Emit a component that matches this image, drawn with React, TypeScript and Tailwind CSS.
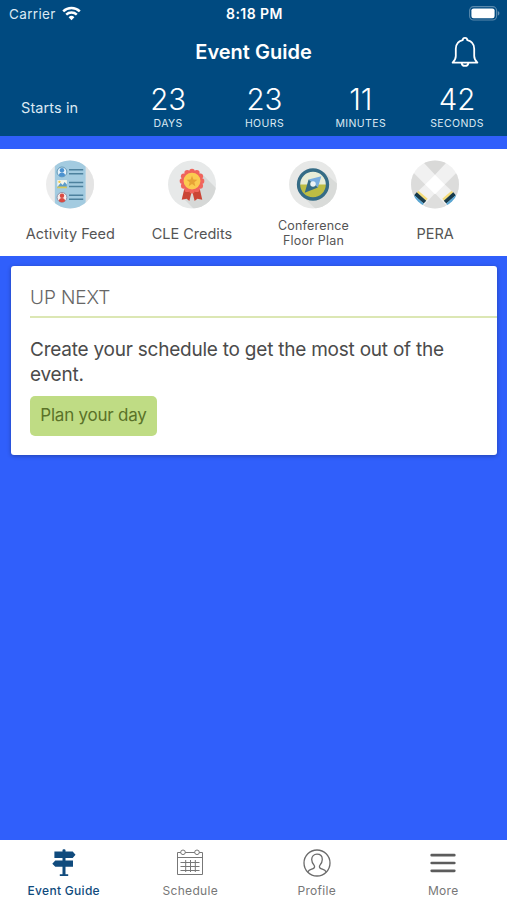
import type { ReactNode } from 'react';
import { clsx } from 'clsx';

interface CountdownUnit {
  value: string;
  label: string;
}

interface Shortcut {
  label: string;
  icon: ReactNode;
  small?: boolean;
}

interface Tab {
  label: string;
  icon: ReactNode;
  active?: boolean;
}

function WifiIcon() {
  return (
    <svg className="h-[15px] w-[19px]" viewBox="0 0 19 15" fill="none" stroke="#fff" strokeWidth="2.5">
      <path d="M1.2 5.3a12 12 0 0 1 16.6 0" />
      <path d="M4.2 8.6a7.8 7.8 0 0 1 10.6 0" />
      <path d="M9.5 14.2 6.6 11.2a4.2 4.2 0 0 1 5.8 0z" fill="#fff" stroke="none" />
    </svg>
  );
}

function BatteryIcon() {
  return (
    <svg className="h-[15px] w-[31px]" viewBox="0 0 31 15">
      <rect x="0.6" y="0.6" width="27" height="13.4" rx="4" fill="none" stroke="#fff" strokeOpacity="0.35" strokeWidth="1.1" />
      <rect x="2.4" y="2.4" width="23.2" height="9.8" rx="2.2" fill="#fff" />
      <path d="M28.8 5v4.6c1-.4 1.6-1.3 1.6-2.3s-.6-1.9-1.6-2.3z" fill="#fff" fillOpacity="0.4" />
    </svg>
  );
}

function BellIcon() {
  return (
    <svg className="h-[32px] w-[30px]" viewBox="0 0 30 32" fill="none" stroke="#fff" strokeWidth="1.8" strokeLinejoin="round">
      <path d="M15 1.8c-1.4 0-2.2.9-2.3 2.3C8.2 5.1 5.8 8.6 5.8 12.8V20c0 2.6-1 4.5-3.2 6.600h24.800c-2.200-2.100-3.200-4-3.200-6.600v-7.200c0-4.200-2.400-7.700-6.900-8.700-.1-1.400-.9-2.300-2.300-2.300z" />
      <path d="M11.6 26.800c.2 1.900 1.500 3.100 3.400 3.100s3.200-1.200 3.400-3.100" />
    </svg>
  );
}

function FeedIcon() {
  return (
    <svg className="size-[50px]" viewBox="0 0 50 50">
      <clipPath id="feed">
        <circle cx="25" cy="25" r="24.5" />
      </clipPath>
      <g clipPath="url(#feed)">
        <rect width="50" height="50" fill="#ececec" />
        <path d="M41 0h9v50h-9z" fill="#e4e4e4" />
        <rect x="9.5" y="0" width="31.5" height="50" fill="#a3cbe0" />
        <circle cx="16.8" cy="12.2" r="5" fill="#e6f2fa" stroke="#5b93b3" strokeWidth="1" />
        <circle cx="16.8" cy="10.5" r="2.3" fill="#4b92d0" />
        <path d="M13.6 15.8c0-4 6.4-4 6.4 0-1.9 1.7-4.5 1.7-6.4 0z" fill="#4b92d0" />
        <rect x="12" y="20.5" width="9.8" height="8" fill="#f3f4ea" />
        <path d="m12 27.5 3.5-4 2 2 2-3 2.3 2.5v3.5H12z" fill="#5d9cc9" />
        <path d="M12 27h9.8v1.8H12z" fill="#d8c95a" />
        <circle cx="14.2" cy="22.3" r="1.2" fill="#f2c94c" />
        <circle cx="16.8" cy="38.2" r="5" fill="#f5eeee" stroke="#8f8fa5" strokeWidth="1" />
        <circle cx="16.8" cy="36.5" r="2.3" fill="#d94a42" />
        <path d="M13.6 41.8c0-4 6.4-4 6.4 0-1.9 1.7-4.5 1.7-6.4 0z" fill="#d94a42" />
        <path d="M24 10h14.5M24 14h14.5M24 23h14.5M24 27h14.5M24 36h14.5M24 40h14.5" stroke="#4d819d" strokeWidth="1.5" />
      </g>
    </svg>
  );
}

function RibbonIcon() {
  const petals = Array.from({ length: 12 }, (_, i) => {
    const a = (i * Math.PI) / 6;
    return { x: 25 + 9.7 * Math.cos(a), y: 21.5 + 9.7 * Math.sin(a) };
  });

  return (
    <svg className="size-[50px]" viewBox="0 0 50 50">
      <clipPath id="ribbon">
        <circle cx="25" cy="25" r="24.5" />
      </clipPath>
      <g clipPath="url(#ribbon)">
        <rect width="50" height="50" fill="#e7e9e9" />
        <path d="m34 13 18 18v24H32L15 38z" fill="#d6d8d7" />
      </g>
      <path d="m17 30-2.5 10.5 5-.8 2.8 2.3 2.5-10z" fill="#ca4536" />
      <path d="m33 30 2.5 10.5-5-.8-2.8 2.3-2.5-10z" fill="#ca4536" />
      <circle cx="25" cy="21.5" r="10.5" fill="#f0645c" />
      {petals.map((p, i) => (
        <circle key={i} cx={p.x} cy={p.y} r="2.9" fill="#f0645c" />
      ))}
      <circle cx="25" cy="21.5" r="8.6" fill="#fbcb50" />
      <path d="m25 16 1.5 3.8 4 .3-3.1 2.6 1 4L25 24.5l-3.4 2.2 1-4-3.1-2.6 4-.3z" fill="#e7a336" />
    </svg>
  );
}

function CompassIcon() {
  return (
    <svg className="size-[50px]" viewBox="0 0 50 50">
      <clipPath id="compass">
        <circle cx="25" cy="25" r="24.5" />
      </clipPath>
      <g clipPath="url(#compass)">
        <rect width="50" height="50" fill="#e7e8e7" />
        <path d="m36 12 18 16v24H30L14 37z" fill="#d9dbd9" />
      </g>
      <circle cx="25" cy="25" r="15" fill="#e8edd8" />
      <path d="M11 25h28a14 14 0 0 1-28 0z" fill="#bdbd43" />
      <circle cx="25" cy="25" r="14.8" fill="none" stroke="#356c86" strokeWidth="3.4" />
      <path d="m33.5 16.500-3.500 11.500-9.500-8z" fill="#78ade0" />
      <path d="m16.5 33.500 4-13.500 9.500 8z" fill="#356c86" />
      <circle cx="25" cy="24.5" r="2.8" fill="#edf3f5" />
    </svg>
  );
}

function PeraIcon() {
  return (
    <svg className="size-[50px]" viewBox="0 0 50 50">
      <clipPath id="pera">
        <circle cx="25" cy="25" r="24.5" />
      </clipPath>
      <g clipPath="url(#pera)">
        <rect width="50" height="50" fill="#f1f1f1" />
        <path d="M10-1h30L25 15z" fill="#d9d9d8" />
        <path d="M-1 9v31l16-15z" fill="#dcdcdb" />
        <path d="M51 9v31L35 25z" fill="#dcdcdb" />
        <path d="m25 34 16 17H9z" fill="#dededd" />
        <path d="m25 15 10 10-10 10-10-10z" fill="#fff" />
        {/* cuffs */}
        <g strokeWidth="3.2">
          <path d="m7 32.500 9.500 8.200" stroke="#f4dc7c" />
          <path d="m5 34.500 9.700 8.500" stroke="#193b4c" strokeWidth="4" />
          <path d="m2.500 37.800 9.700 8.500" stroke="#5aa6d2" strokeWidth="4.500" />
          <path d="m43 32.500-9.500 8.200" stroke="#f4dc7c" />
          <path d="m45 34.500-9.700 8.500" stroke="#193b4c" strokeWidth="4" />
          <path d="m47.500 37.800-9.700 8.500" stroke="#5aa6d2" strokeWidth="4.500" />
        </g>
      </g>
    </svg>
  );
}

function SignpostIcon() {
  return (
    <svg className="size-7" viewBox="0 0 28 28" fill="#104b7d">
      <path d="M12.500 1.200c0-1.200 3-1.200 3 0v1.400h7.200l2.800 3.200-2.800 3.200h-7.200v2.600H23v6.200h-7.500v7.500h2.700v1.800H9.800v-1.800h2.700v-7.500H5.300l-3-3.100 3-3.100h7.200V9H4.400V2.600h8.100z" />
    </svg>
  );
}

function CalendarIcon() {
  return (
    <svg className="size-7" viewBox="0 0 28 28" fill="none" stroke="#777" strokeWidth="1">
      <path d="M4.800 3.500H1.500v22h25v-22h-3.300M9.200 3.500h9.600M1.500 8.500h25" />
      <circle cx="7" cy="3.3" r="2.3" />
      <circle cx="21" cy="3.3" r="2.3" />
      <path d="M4.500 13.500h19M4.500 17.500h19M4.500 21.500h19M9.700 11v12M14.500 11v12M19.300 11v12" />
    </svg>
  );
}

function ProfileIcon() {
  return (
    <svg className="size-7" viewBox="0 0 28 28" fill="none" stroke="#6b6b6b" strokeWidth="1.3">
      <circle cx="14" cy="14" r="13" />
      <path d="M4.800 23c1.200-2.300 3.500-2.500 5.300-3.400 1.600-.8 1.900-2.300.9-3.500-1.400-1.700-2.300-3.400-2.300-5.600C8.700 7.200 10.900 5.200 14 5.200s5.300 2 5.300 5.300c0 2.200-.9 3.900-2.300 5.600-1 1.200-.7 2.700.9 3.500 1.800.9 4.100 1.100 5.300 3.400" />
    </svg>
  );
}

function MenuIcon() {
  return (
    <svg className="size-7" viewBox="0 0 28 28" stroke="#5c5c5c" strokeWidth="2.7" strokeLinecap="round">
      <path d="M2.700 6.200h22.600M2.700 14h22.600M2.700 21.800h22.600" />
    </svg>
  );
}

const countdown: CountdownUnit[] = [
  { value: '23', label: 'DAYS' },
  { value: '23', label: 'HOURS' },
  { value: '11', label: 'MINUTES' },
  { value: '42', label: 'SECONDS' },
];

const shortcuts: Shortcut[] = [
  { label: 'Activity Feed', icon: <FeedIcon /> },
  { label: 'CLE Credits', icon: <RibbonIcon /> },
  { label: 'Conference Floor Plan', icon: <CompassIcon />, small: true },
  { label: 'PERA', icon: <PeraIcon /> },
];

const tabs: Tab[] = [
  { label: 'Event Guide', icon: <SignpostIcon />, active: true },
  { label: 'Schedule', icon: <CalendarIcon /> },
  { label: 'Profile', icon: <ProfileIcon /> },
  { label: 'More', icon: <MenuIcon /> },
];

export default function App() {
  return (
    <div className="flex h-[900px] w-[507px] flex-col overflow-hidden bg-[#305ffb] font-['Inter',sans-serif]">
      <header className="h-[136px] shrink-0 bg-[#004a80] text-white">
        <div className="grid h-[26px] grid-cols-3 items-center pr-[7px] pl-[9px] text-[13.5px] leading-[26px]">
          <div className="flex items-center gap-[6px] tracking-[0.35px] text-[#dbe9f3]">
            Carrier
            <WifiIcon />
          </div>
          <div className="pt-px text-center text-[14px] font-semibold tracking-[0.45px]">8:18 PM</div>
          <div className="flex justify-end">
            <BatteryIcon />
          </div>
        </div>

        <div className="grid h-[52px] grid-cols-[1fr_auto_1fr] items-center pr-[27px] pl-[27px]">
          <span />
          <h1 className="text-[20px] font-semibold">Event Guide</h1>
          <button className="justify-self-end">
            <BellIcon />
          </button>
        </div>

        <div className="flex h-[58px] pl-[21px]">
          <div className="w-[99px] pt-[19px] text-[14.5px] leading-[22px] tracking-[0.1px] text-[#dbe9f3]">Starts in</div>
          {countdown.map((unit) => (
            <div key={unit.label} className="w-[96.3px] text-center">
              <div className="pt-[5px] text-[29.5px] leading-[33px] font-light">{unit.value}</div>
              <div className="pt-px text-[10.5px] leading-[13px] tracking-[0.4px] text-[#dbe9f3]">{unit.label}</div>
            </div>
          ))}
        </div>
      </header>

      <nav className="mt-[13px] flex h-[107px] shrink-0 bg-white pl-[9.5px]">
        {shortcuts.map((item) => (
          <div key={item.label} className="flex w-[121.6px] flex-col items-center pt-[11px] text-[#555]">
            {item.icon}
            <div
              className={clsx(
                'flex h-[48px] items-center text-center',
                item.small ? 'w-[90px] pt-[2px] text-[12.5px] leading-[15px] tracking-[0.2px]' : 'pt-[2px] text-[14.5px]'
              )}
            >
              {item.label}
            </div>
          </div>
        ))}
      </nav>

      <main className="flex-1 px-[10px] pt-[10px]">
        <section className="ml-px h-[189px] rounded-[3px] bg-white pt-[20px] pl-[19px] shadow-[0_1px_4px_rgba(0,0,0,0.3)]">
          <h2 className="h-[32px] border-b-2 border-[#dce7b4] text-[19px] leading-[23px] font-light tracking-[-0.1px] text-[#666]">
            UP NEXT
          </h2>
          <p className="mt-[19px] text-[19px] leading-[25px] tracking-[-0.23px] text-[#4b4b4b]">
            Create your schedule to get the most out of the event.
          </p>
          <button className="mt-[9px] h-[40px] w-[127px] rounded-[5px] bg-[#bfdc84] text-[17px] tracking-[-0.22px] text-[#5a7228]">
            Plan your day
          </button>
        </section>
      </main>

      <footer className="flex h-[60px] shrink-0 bg-white pl-[0.5px]">
        {tabs.map((tab) => (
          <div key={tab.label} className="flex w-[126.5px] flex-col items-center pt-[9px]">
            {tab.icon}
            <span
              className={clsx(
                'mt-[6px] text-[12px] leading-[16px] tracking-[0.3px]',
                tab.active ? 'font-medium text-[#104b7d]' : 'text-[#777]'
              )}
            >
              {tab.label}
            </span>
          </div>
        ))}
      </footer>
    </div>
  );
}
